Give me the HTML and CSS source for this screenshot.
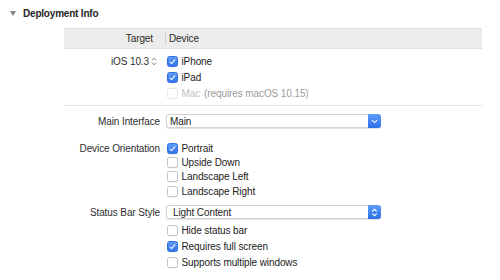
FILE: index.html
```html
<!DOCTYPE html>
<html>
<head>
<meta charset="utf-8">
<link rel="stylesheet" href="styles.css">
</head>
<body>
<div class="page">
  <div class="section-title">
    <span class="disclosure"></span>
    <span class="title-text">Deployment Info</span>
  </div>

  <div class="panel">
    <div class="table-head">
      <div class="th-label">Target</div>
      <div class="th-device">Device</div>
    </div>

    <div class="target-rows">
      <div class="row r16">
        <div class="label target-label">iOS 10.3
          <svg class="stepper" width="6" height="9" viewBox="0 0 6 9"><path d="M1 3.4 L3 1.2 L5 3.4 M1 5.6 L3 7.8 L5 5.6" fill="none" stroke="#6e6e6e" stroke-width="0.9"/></svg>
        </div>
        <div class="control"><span class="cb on"></span><span class="cb-text">iPhone</span></div>
      </div>
      <div class="row r16">
        <div class="label"></div>
        <div class="control"><span class="cb on"></span><span class="cb-text">iPad</span></div>
      </div>
      <div class="row r16">
        <div class="label"></div>
        <div class="control"><span class="cb disabled"></span><span class="cb-text dim">Mac</span><span class="note">(requires macOS 10.15)</span></div>
      </div>
    </div>

    <div class="separator"></div>

    <div class="row select-row main-row">
      <div class="label">Main Interface</div>
      <div class="control">
        <div class="select wide">
          <span class="select-text">Main</span>
          <span class="select-btn"><svg width="7" height="5" viewBox="0 0 7 5"><path d="M1 1.2 L3.5 3.6 L6 1.2" fill="none" stroke="#fff" stroke-width="1.1"/></svg></span>
        </div>
      </div>
    </div>

    <div class="orient">
      <div class="row r14">
        <div class="label">Device Orientation</div>
        <div class="control"><span class="cb on"></span><span class="cb-text">Portrait</span></div>
      </div>
      <div class="row r14">
        <div class="label"></div>
        <div class="control"><span class="cb"></span><span class="cb-text">Upside Down</span></div>
      </div>
      <div class="row r14">
        <div class="label"></div>
        <div class="control"><span class="cb"></span><span class="cb-text">Landscape Left</span></div>
      </div>
      <div class="row r14">
        <div class="label"></div>
        <div class="control"><span class="cb"></span><span class="cb-text">Landscape Right</span></div>
      </div>
    </div>

    <div class="row select-row status-row">
      <div class="label">Status Bar Style</div>
      <div class="control">
        <div class="select wide">
          <span class="select-text pad">Light Content</span>
          <span class="select-btn"><svg width="7" height="9" viewBox="0 0 7 9"><path d="M1.3 3.4 L3.5 1.3 L5.7 3.4 M1.3 5.6 L3.5 7.7 L5.7 5.6" fill="none" stroke="#fff" stroke-width="1.1"/></svg></span>
        </div>
      </div>
    </div>

    <div class="status-opts">
      <div class="row r16">
        <div class="label"></div>
        <div class="control"><span class="cb"></span><span class="cb-text">Hide status bar</span></div>
      </div>
      <div class="row r16">
        <div class="label"></div>
        <div class="control"><span class="cb on"></span><span class="cb-text">Requires full screen</span></div>
      </div>
      <div class="row r16">
        <div class="label"></div>
        <div class="control"><span class="cb"></span><span class="cb-text">Supports multiple windows</span></div>
      </div>
    </div>
  </div>
</div>
</body>
</html>
```

FILE: styles.css
```css
html, body {
  margin: 0;
  padding: 0;
  background: #ffffff;
}

body {
  width: 500px;
  height: 280px;
  overflow: hidden;
  font-family: "Liberation Sans", Arial, sans-serif;
  font-size: 10px;
  letter-spacing: -0.1px;
  color: #222222;
}

.page {
  display: flex;
  flex-direction: column;
}

.section-title {
  height: 26px;
  display: flex;
  align-items: center;
  padding-left: 10px;
}

.disclosure {
  width: 0;
  height: 0;
  border-left: 3px solid transparent;
  border-right: 3px solid transparent;
  border-top: 5px solid #858585;
  margin-right: 7px;
}

.title-text {
  font-weight: bold;
  font-size: 10px;
  letter-spacing: -0.2px;
  color: #262626;
}

.panel {
  margin-left: 64px;
  width: 418px;
  margin-top: 2px;
  display: flex;
  flex-direction: column;
}

.table-head {
  height: 19px;
  background: #ececec;
  border-top: 1px solid #e0e0e0;
  border-bottom: 1px solid #e0e0e0;
  display: flex;
  align-items: center;
  color: #2a2a2a;
}

.th-label {
  width: 89px;
  padding-right: 12px;
  text-align: right;
}

.th-device {
  border-left: 1px solid #d4d4d4;
  padding-left: 3px;
  height: 13px;
  line-height: 13px;
}

.target-rows {
  margin-top: 4px;
  display: flex;
  flex-direction: column;
}

.row {
  display: flex;
  align-items: center;
}

.r16 { height: 16px; }
.r14 { height: 14.4px; }

.label {
  width: 96px;
  flex: none;
  text-align: right;
  padding-right: 6px;
  color: #2e2e2e;
  white-space: nowrap;
}

.target-label {
  width: 93px;
  padding-right: 9px;
  display: flex;
  justify-content: flex-end;
  align-items: center;
  gap: 2px;
}

.stepper {
  display: block;
}

.control {
  display: flex;
  align-items: center;
  padding-left: 0.5px;
  white-space: nowrap;
}

.cb {
  width: 9px;
  height: 9px;
  border: 0.5px solid #c4c4c4;
  border-radius: 2.5px;
  background: #ffffff;
  box-shadow: 0 0.5px 0.5px rgba(0,0,0,0.08);
  margin-right: 4px;
  flex: none;
  position: relative;
}

.cb.on {
  border-color: #2f6de0;
  background: linear-gradient(#5c9cf7, #3474ea);
}

.cb.on::after {
  content: "";
  position: absolute;
  left: 3px;
  top: 1px;
  width: 2px;
  height: 5px;
  border-right: 1.4px solid #fff;
  border-bottom: 1.4px solid #fff;
  transform: rotate(40deg);
}

.cb.disabled {
  border-color: #e6e6e6;
  box-shadow: none;
}

.cb-text {
  color: #222222;
}

.cb-text.dim {
  color: #c2c2c2;
  margin-right: 4px;
}

.note {
  color: #9b9b9b;
}

.separator {
  margin-top: 4px;
  height: 1px;
  background: #e6e6e6;
}

.main-row {
  margin-top: 8px;
  height: 14px;
}

.orient {
  margin-top: 13px;
  display: flex;
  flex-direction: column;
}

.status-row {
  margin-top: 6.5px;
  height: 14px;
}

.status-opts {
  margin-top: 3.5px;
  display: flex;
  flex-direction: column;
}

.select {
  height: 14px;
  box-sizing: border-box;
  border: 0.5px solid #d2d2d2;
  border-radius: 3px;
  background: #ffffff;
  box-shadow: 0 0.5px 1px rgba(0,0,0,0.12);
  display: flex;
  align-items: center;
  justify-content: space-between;
}

.select.wide {
  width: 215px;
  margin-left: -0.5px;
}

.select-text {
  padding-left: 3px;
  color: #222222;
}

.select-text.pad {
  padding-left: 6px;
}

.select-btn {
  width: 13px;
  height: 14px;
  margin-right: -0.5px;
  border-radius: 0 3px 3px 0;
  background: linear-gradient(#5c9df8, #2d6ee8);
  display: flex;
  align-items: center;
  justify-content: center;
}

.select-btn svg {
  display: block;
}
```
